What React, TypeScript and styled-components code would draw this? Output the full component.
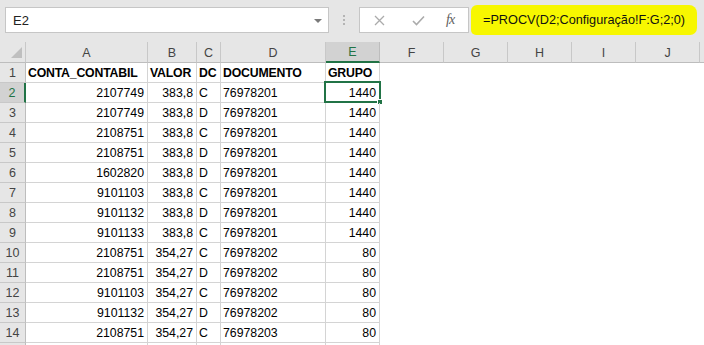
import React from "react";
import styled, { createGlobalStyle, css } from "styled-components";

const GlobalStyle = createGlobalStyle`
  html, body { margin: 0; padding: 0; background: #ffffff; }
  body { font-family: "Liberation Sans", Arial, sans-serif; overflow: hidden; }
  * { box-sizing: border-box; }
`;

const Page = styled.div`
  width: 704px;
  height: 345px;
  overflow: hidden;
  background: #ffffff;
`;

const TopBar = styled.div`
  height: 42px;
  background: #e6e6e6;
  display: flex;
  align-items: flex-start;
  padding: 7px 0 0 5px;
`;

const NameBox = styled.div`
  width: 324px;
  height: 26px;
  background: #ffffff;
  border: 1px solid #c6c6c6;
  display: flex;
  align-items: center;
  justify-content: space-between;
  padding: 0 6px 0 7px;
  font-size: 13px;
  color: #222;
`;

const Caret = styled.span`
  width: 0;
  height: 0;
  border-left: 4px solid transparent;
  border-right: 4px solid transparent;
  border-top: 4px solid #7a7a7a;
  margin-top: 1px;
`;

const Grip = styled.div`
  width: 30px;
  height: 26px;
  display: flex;
  flex-direction: column;
  align-items: center;
  justify-content: center;
  gap: 2px;
`;

const GripDot = styled.span`
  width: 2px;
  height: 2px;
  background: #b4b4b4;
`;

const ButtonBox = styled.div`
  width: 110px;
  height: 26px;
  background: #ffffff;
  border: 1px solid #c6c6c6;
  display: flex;
  align-items: center;
  padding-left: 14px;
`;

const IconSlot = styled.span<{ $w: number }>`
  width: ${(p) => p.$w}px;
  display: flex;
  align-items: center;
  justify-content: flex-start;
`;

const Fx = styled.span`
  font-family: "Liberation Serif", "Times New Roman", serif;
  font-style: italic;
  font-size: 14px;
  color: #606060;
  letter-spacing: -1px;
`;

const FormulaInput = styled.div`
  flex: 1;
  height: 26px;
  margin-left: 2px;
  display: flex;
  align-items: center;
`;

const Highlight = styled.div`
  width: 226px;
  height: 30px;
  background: #f7f700;
  border-radius: 6px 8px 7px 5px;
  display: flex;
  align-items: center;
  padding-left: 12px;
  font-size: 12.7px;
  color: #111;
  white-space: nowrap;
`;

const Sheet = styled.div`
  display: grid;
  grid-template-columns: 26px 122px 49px 24px 105px 54px 64px 64px 64px 64px 64px 1fr;
  grid-template-rows: 21px;
  grid-auto-rows: 20px;
`;

const HeaderBase = css`
  background: #e6e6e6;
  border-right: 1px solid #c8c8c8;
  border-bottom: 1px solid #bdbdbd;
  color: #444;
  font-size: 12.5px;
  display: flex;
  align-items: center;
  justify-content: center;
`;

const Corner = styled.div`
  ${HeaderBase};
  position: relative;
  align-items: flex-end;
  justify-content: flex-end;
  padding: 0 3px 4px 0;
`;

const ColHead = styled.div<{ $sel?: boolean }>`
  ${HeaderBase};
  padding-top: 1px;
  ${(p) =>
    p.$sel &&
    css`
      background: #d2d2d2;
      color: #217346;
      border-bottom: 2px solid #217346;
      border-right-color: #bdbdbd;
    `}
`;

const RowHead = styled.div<{ $sel?: boolean }>`
  ${HeaderBase};
  border-bottom-color: #c8c8c8;
  border-right-color: #bdbdbd;
  font-size: 12.5px;
  ${(p) =>
    p.$sel &&
    css`
      background: #d2d2d2;
      color: #217346;
      border-right: 2px solid #217346;
    `}
`;

const Cell = styled.div<{ $num?: boolean; $bold?: boolean; $grid?: boolean }>`
  position: relative;
  font-size: 12.3px;
  color: #000;
  white-space: nowrap;
  overflow: visible;
  display: flex;
  align-items: center;
  padding: 1px 3px 0 2px;
  justify-content: ${(p) => (p.$num ? "flex-end" : "flex-start")};
  font-weight: ${(p) => (p.$bold ? 700 : 400)};
  letter-spacing: ${(p) => (p.$bold ? "-0.2px" : "0")};
  border-right: 1px solid ${(p) => (p.$grid ? "#d4d4d4" : "transparent")};
  border-bottom: 1px solid ${(p) => (p.$grid ? "#d4d4d4" : "transparent")};
`;

const Selection = styled.div`
  position: absolute;
  left: -2px;
  top: -2px;
  right: -2px;
  bottom: -1px;
  border: 2px solid #217346;
  pointer-events: none;
`;

const Handle = styled.span`
  position: absolute;
  right: -4px;
  bottom: -4px;
  width: 6px;
  height: 6px;
  background: #217346;
  border: 1px solid #ffffff;
`;

const cols = ["A", "B", "C", "D", "E", "F", "G", "H", "I", "J"];

type Row = [string, string, string, string, string];

const rows: Row[] = [
  ["CONTA_CONTABIL", "VALOR", "DC", "DOCUMENTO", "GRUPO"],
  ["2107749", "383,8", "C", "76978201", "1440"],
  ["2107749", "383,8", "D", "76978201", "1440"],
  ["2108751", "383,8", "C", "76978201", "1440"],
  ["2108751", "383,8", "D", "76978201", "1440"],
  ["1602820", "383,8", "D", "76978201", "1440"],
  ["9101103", "383,8", "C", "76978201", "1440"],
  ["9101132", "383,8", "D", "76978201", "1440"],
  ["9101133", "383,8", "C", "76978201", "1440"],
  ["2108751", "354,27", "C", "76978202", "80"],
  ["2108751", "354,27", "D", "76978202", "80"],
  ["9101103", "354,27", "C", "76978202", "80"],
  ["9101132", "354,27", "D", "76978202", "80"],
  ["2108751", "354,27", "C", "76978203", "80"],
  ["", "", "", "", ""],
];

const numericCols = [true, true, false, false, true];

export default function App() {
  return (
    <Page>
      <GlobalStyle />
      <TopBar>
        <NameBox>
          <span>E2</span>
          <Caret />
        </NameBox>
        <Grip>
          <GripDot />
          <GripDot />
          <GripDot />
        </Grip>
        <ButtonBox>
          <IconSlot $w={38}>
            <svg width="11" height="11" viewBox="0 0 11 11">
              <path d="M1 1L10 10M10 1L1 10" stroke="#ababab" strokeWidth="1.3" fill="none" />
            </svg>
          </IconSlot>
          <IconSlot $w={34}>
            <svg width="13" height="11" viewBox="0 0 13 11">
              <path d="M1 6L4.5 9.5L12 1.5" stroke="#ababab" strokeWidth="1.6" fill="none" />
            </svg>
          </IconSlot>
          <IconSlot $w={20}>
            <Fx>fx</Fx>
          </IconSlot>
        </ButtonBox>
        <FormulaInput>
          <Highlight>=PROCV(D2;Configuração!F:G;2;0)</Highlight>
        </FormulaInput>
      </TopBar>
      <Sheet>
        <Corner>
          <svg width="11" height="11" viewBox="0 0 11 11">
            <path d="M11 0L11 11L0 11Z" fill="#bfbfbf" />
          </svg>
        </Corner>
        {cols.map((c) => (
          <ColHead key={c} $sel={c === "E"}>
            {c}
          </ColHead>
        ))}
        <ColHead />
        {rows.map((r, i) => (
          <React.Fragment key={i}>
            <RowHead $sel={i === 1}>{i < 14 ? i + 1 : ""}</RowHead>
            {r.map((v, j) => (
              <Cell key={j} $grid $num={i > 0 && numericCols[j]} $bold={i === 0}>
                {v}
                {i === 1 && j === 4 && (
                  <Selection>
                    <Handle />
                  </Selection>
                )}
              </Cell>
            ))}
            {Array.from({ length: 6 }).map((_, k) => (
              <Cell key={`e${k}`} />
            ))}
          </React.Fragment>
        ))}
      </Sheet>
    </Page>
  );
}
